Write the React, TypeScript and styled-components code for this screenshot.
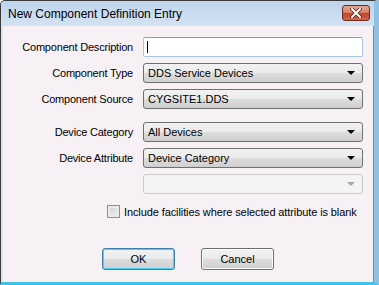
import React from 'react';
import styled, { createGlobalStyle } from 'styled-components';

const GlobalStyle = createGlobalStyle`
  html, body {
    margin: 0;
    padding: 0;
    background: #ffffff;
  }
  * {
    box-sizing: border-box;
  }
`;

const Window = styled.div`
  width: 379px;
  height: 285px;
  display: flex;
  flex-direction: column;
  border-left: 1px solid #3a3a3a;
  border-top: 1px solid #3a3a3a;
  border-right: 5px solid #8fc1e3;
  border-bottom: 3px solid #3ec2ec;
  border-top-left-radius: 5px;
  background: #c6daef;
  font-family: 'Liberation Sans', Arial, sans-serif;
  color: #000;
  overflow: hidden;
`;

const TitleBar = styled.div`
  height: 25px;
  display: flex;
  align-items: center;
  justify-content: space-between;
  padding: 0 4px 0 7px;
  background: linear-gradient(#bed4ec, #d4e3f3);
`;

const Title = styled.span`
  font-family: 'Liberation Sans', Arial, sans-serif;
  font-size: 12px;
  color: #000;
`;

const CloseButton = styled.div`
  width: 28px;
  height: 16px;
  margin-top: -2px;
  border: 1px solid #6e2a22;
  border-radius: 3px;
  background: linear-gradient(#e6a595 0%, #d8826d 45%, #c2432b 55%, #cf6a4a 100%);
  display: flex;
  align-items: center;
  justify-content: center;
`;

const Body = styled.div`
  flex: 1;
  background: #f7f1f6;
  border-left: 2px solid #d9e6f3;
  border-right: 1px solid #6a8fb0;
  padding: 11px 0 0 0;
  display: flex;
  flex-direction: column;
`;

const Form = styled.div`
  display: grid;
  grid-template-columns: 129px 220px;
  column-gap: 10px;
  row-gap: 6px;
  margin-left: 1px;
`;

const Label = styled.div`
  font-size: 11px;
  letter-spacing: -0.2px;
  text-align: right;
  align-self: center;
`;

const Spacer = styled.div<{ $h: number }>`
  grid-column: 1 / span 2;
  height: ${(p) => p.$h}px;
`;

const TextBox = styled.div`
  position: relative;
  height: 20px;
  border: 1px solid #a9c6e6;
  border-top-color: #7aa2cc;
  border-radius: 2px;
  background: #ffffff;
`;

const Caret = styled.span`
  position: absolute;
  left: 3px;
  top: 3px;
  width: 1px;
  height: 12px;
  background: #000;
`;

const Combo = styled.div<{ $disabled?: boolean }>`
  height: 20px;
  display: flex;
  align-items: center;
  justify-content: space-between;
  padding: 0 7px 0 4px;
  border: 1px solid ${(p) => (p.$disabled ? '#c9c9c9' : '#707070')};
  border-radius: 3px;
  background: ${(p) =>
    p.$disabled
      ? '#f4f4f4'
      : 'linear-gradient(#f2f2f2 0%, #ebebeb 48%, #dddddd 52%, #cfcfcf 100%)'};
  font-size: 11px;
`;

const Arrow = styled.span<{ $disabled?: boolean }>`
  width: 0;
  height: 0;
  border-left: 4px solid transparent;
  border-right: 4px solid transparent;
  border-top: 4px solid ${(p) => (p.$disabled ? '#a8a8a8' : '#000')};
`;

const CheckRow = styled.div`
  display: flex;
  align-items: center;
  gap: 4px;
  margin: 11px 0 0 104px;
  font-size: 11px;
  letter-spacing: -0.1px;
`;

const CheckBox = styled.span`
  width: 13px;
  height: 13px;
  border: 1px solid #8f8f8f;
  background: linear-gradient(135deg, #cfcfcf, #f4f4f4);
  box-shadow: inset 0 0 0 2px #e9e9e9;
`;

const ButtonRow = styled.div`
  display: flex;
  justify-content: center;
  gap: 26px;
  margin-top: 30px;
`;

const Button = styled.div<{ $default?: boolean }>`
  width: 73px;
  height: 22px;
  display: flex;
  align-items: center;
  justify-content: center;
  font-size: 11px;
  border: 1px solid ${(p) => (p.$default ? '#3c7fb1' : '#707070')};
  border-radius: 3px;
  background: linear-gradient(#f2f2f2 0%, #ebebeb 48%, #dddddd 52%, #cfcfcf 100%);
  box-shadow: ${(p) => (p.$default ? 'inset 0 0 0 1px #48d2fb' : 'inset 0 0 0 1px #fcfcfc')};
`;

const Combobox: React.FC<{ value?: string; disabled?: boolean }> = ({ value, disabled }) => (
  <Combo $disabled={disabled}>
    <span>{value}</span>
    <Arrow $disabled={disabled} />
  </Combo>
);

const App: React.FC = () => {
  return (
    <>
      <GlobalStyle />
      <Window>
        <TitleBar>
          <Title>New Component Definition Entry</Title>
          <CloseButton>
            <svg width="12" height="10" viewBox="0 0 12 10">
              <path d="M2 1 L10 9 M10 1 L2 9" stroke="#5a2016" strokeWidth="3.6" strokeLinecap="square" />
              <path d="M2 1 L10 9 M10 1 L2 9" stroke="#ffffff" strokeWidth="2" strokeLinecap="square" />
            </svg>
          </CloseButton>
        </TitleBar>
        <Body>
          <Form>
            <Label>Component Description</Label>
            <TextBox>
              <Caret />
            </TextBox>
            <Label>Component Type</Label>
            <Combobox value="DDS Service Devices" />
            <Label>Component Source</Label>
            <Combobox value="CYGSITE1.DDS" />
            <Spacer $h={1} />
            <Label>Device Category</Label>
            <Combobox value="All Devices" />
            <Label>Device Attribute</Label>
            <Combobox value="Device Category" />
            <div />
            <Combobox disabled />
          </Form>
          <CheckRow>
            <CheckBox />
            <span>Include facilities where selected attribute is blank</span>
          </CheckRow>
          <ButtonRow>
            <Button $default>OK</Button>
            <Button>Cancel</Button>
          </ButtonRow>
        </Body>
      </Window>
    </>
  );
};

export default App;
